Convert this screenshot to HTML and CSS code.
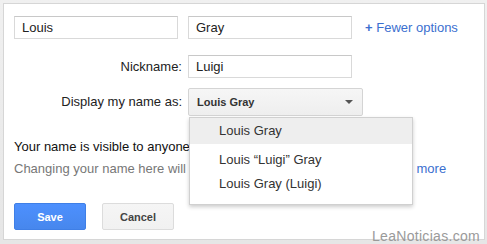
FILE: index.html
```html
<!DOCTYPE html>
<html lang="en">
<head>
    <meta charset="UTF-8">
    <title>Name</title>
    <link rel="stylesheet" href="styles.css">
</head>
<body>

<div class="panel">
    <div class="row">
        <input type="text" class="field" value="Louis">
        <input type="text" class="field field-last" value="Gray">
        <a href="#" class="link options"><span class="plus">+</span> Fewer options</a>
    </div>

    <div class="row row-nick">
        <label class="label">Nickname:</label>
        <input type="text" class="field" value="Luigi">
    </div>

    <div class="row row-display">
        <label class="label">Display my name as:</label>
        <div class="select-wrap">
            <div class="select">
                <span>Louis Gray</span>
                <span class="arrow"></span>
            </div>
            <div class="menu">
                <div class="menu-item active">Louis Gray</div>
                <div class="menu-item second">Louis “Luigi” Gray</div>
                <div class="menu-item">Louis Gray (Luigi)</div>
            </div>
        </div>
    </div>

    <div class="notice">
        <div class="notice-title">Your name is visible to anyone on the web. Learn more</div>
        <div class="notice-text">Changing your name here will change it everywhere you use it. <a href="#" class="link">Learn more</a></div>
    </div>

    <div class="buttons">
        <button class="btn btn-save">Save</button>
        <button class="btn btn-cancel">Cancel</button>
    </div>

    <div class="watermark">LeaNoticias.com</div>
</div>

</body>
</html>
```

FILE: styles.css
```css
* {
    box-sizing: border-box;
}

body {
    margin: 0;
    height: 244px;
    overflow: hidden;
    background: linear-gradient(#f0f0f0, #e6e6e6);
    font-family: "Liberation Sans", Arial, sans-serif;
    font-size: 13px;
    color: #222;
}

.panel {
    position: relative;
    margin: 3px 2px 0 3px;
    height: 237px;
    border: 1px solid #d6d6d6;
    background: #fff;
    padding: 12px 10px 0 10px;
}

.row {
    display: flex;
    align-items: center;
}

.field {
    width: 164px;
    height: 23px;
    padding: 2px 7px;
    border: 1px solid #d9d9d9;
    border-top-color: #c8c8c8;
    font-family: inherit;
    font-size: 13px;
    color: #222;
}

.field-last {
    margin-left: 10px;
}

.link {
    color: #3b6fcf;
    text-decoration: none;
}

.options {
    margin-left: 13px;
    font-size: 13px;
}

.plus {
    font-weight: bold;
}

.label {
    width: 174px;
    padding-right: 6px;
    text-align: right;
    color: #222;
}

.row-nick {
    margin-top: 16px;
}

.row-display {
    margin-top: 10px;
    align-items: flex-start;
}

.row-display .label {
    line-height: 28px;
}

.select-wrap {
    position: relative;
}

.select {
    display: flex;
    align-items: center;
    justify-content: space-between;
    width: 175px;
    height: 28px;
    padding: 0 8px 0 8px;
    border: 1px solid #d4d4d4;
    border-radius: 2px;
    background: linear-gradient(#f6f6f6, #eeeeee);
    font-size: 11px;
    font-weight: bold;
    color: #333;
}

.arrow {
    width: 0;
    height: 0;
    border-left: 4px solid transparent;
    border-right: 4px solid transparent;
    border-top: 4px solid #555;
    margin-right: 1px;
}

.menu {
    position: absolute;
    top: 29px;
    left: 1px;
    width: 224px;
    height: 88px;
    background: #fff;
    border: 1px solid #d0d0d0;
    box-shadow: 0 2px 4px rgba(0, 0, 0, .2);
    z-index: 2;
}

.menu-item {
    padding-left: 29px;
    line-height: 24px;
    color: #333;
    font-size: 13px;
}

.menu-item.active {
    line-height: 26px;
    background: #eeeeee;
}

.menu-item.second {
    margin-top: 4px;
}

.notice {
    margin-top: 20px;
    line-height: 22px;
    white-space: nowrap;
}

.notice-title {
    color: #111;
}

.notice-text {
    color: #777;
}

.buttons {
    display: flex;
    gap: 16px;
    margin-top: 23px;
}

.btn {
    width: 72px;
    height: 27px;
    border-radius: 2px;
    font-family: inherit;
    font-size: 11px;
    font-weight: bold;
}

.btn-save {
    border: 1px solid #3f7fe6;
    background: linear-gradient(#4d90fe, #4787ed);
    color: #fff;
}

.btn-cancel {
    border: 1px solid #dcdcdc;
    background: linear-gradient(#f5f5f5, #f1f1f1);
    color: #444;
}

.watermark {
    position: absolute;
    right: 4px;
    bottom: -5px;
    font-size: 14px;
    line-height: 16px;
    color: #9a9a9a;
    letter-spacing: .3px;
}
```
